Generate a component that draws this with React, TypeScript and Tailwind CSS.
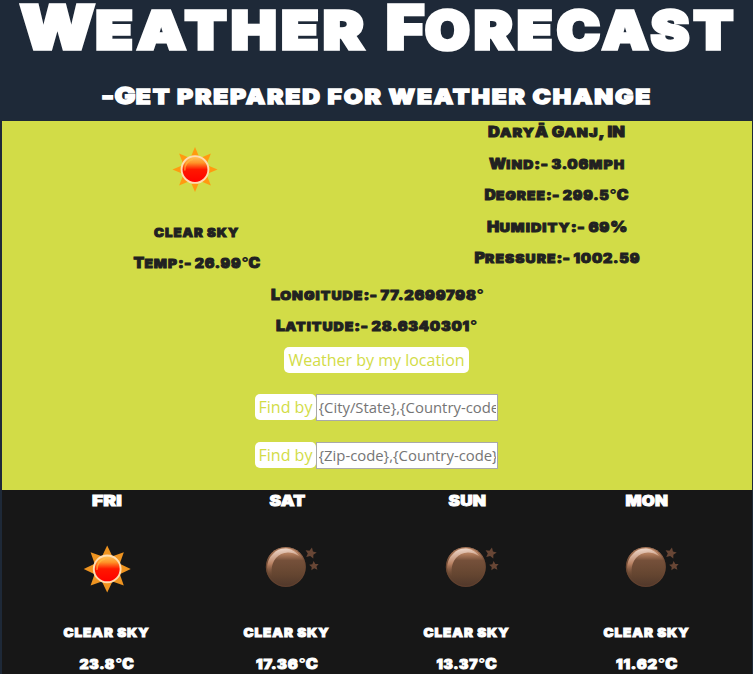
import { useLayoutEffect, useRef, useState } from "react";

type DisplayProps = { text: string; width: number; className: string };

// Chunky small-caps lettering, stretched horizontally to a given width.
function Display({ text, width, className }: DisplayProps) {
  const ref = useRef<HTMLSpanElement>(null);
  const [scale, setScale] = useState(1);
  useLayoutEffect(() => {
    if (ref.current) setScale(width / ref.current.offsetWidth);
  }, [text, width]);
  const parts = text.match(/[a-zā]+|[0-9.]+|°|[^a-zā0-9.°]+/g) ?? [];
  return (
    <div className={`flex justify-center whitespace-pre font-['Inter',sans-serif] font-black ${className}`}>
      <span ref={ref} className="inline-block shrink-0" style={{ transform: `scaleX(${scale})` }}>
        {parts.map((part, i) =>
          /^[a-zā]/.test(part) ? (
            <span key={i} className="text-[0.88em] uppercase tracking-[0.075em]">{part}</span>
          ) : /^[0-9.]/.test(part) ? (
            <span key={i} className="text-[0.92em] tracking-[0.05em]">{part}</span>
          ) : part === "°" ? (
            <span key={i} className="font-bold [-webkit-text-stroke:0.2px_currentColor]">{part}</span>
          ) : (
            <span key={i} className="tracking-[0.01em]">{part}</span>
          )
        )}
      </span>
    </div>
  );
}

const BODY = "text-[14px] leading-[21px] h-[21px] [-webkit-text-stroke:0.9px_currentColor]";
const TITLE = "h-[54px] text-[60px] leading-[54px] [-webkit-text-stroke:3.5px_currentColor]";

function Sun({ id, large = false }: { id: string; large?: boolean }) {
  return (
    <svg viewBox="0 0 100 100" className="block size-[100px]">
      <defs>
        <linearGradient id={id} x1="0" y1="0" x2="0" y2="1">
          <stop offset="0" stopColor="#ffc860" />
          <stop offset="0.25" stopColor="#ff9428" />
          <stop offset="0.5" stopColor="#ff1800" />
          <stop offset="1" stopColor="#ff0000" />
        </linearGradient>
      </defs>
      <g transform={large ? "translate(50.2 47.9)" : "translate(48 48.5)"}>
        {[0, 45, 90, 135, 180, 225, 270, 315].map((a) => (
          <path
            key={a}
            d={large ? "M-5.5-12 0-23.5 5.5-12Z" : "M-4-13 0-22.5 4-13Z"}
            fill={large ? "#ef9420" : "#ff9a10"}
            transform={`rotate(${a})`}
          />
        ))}
        <circle r="13.4" fill={`url(#${id})`} stroke="#ffdcb0" strokeWidth="1.9" />
        <path d="M-10.2 1A10.2 10.2 0 0 1 -2-10.2" fill="none" stroke="#ffc040" strokeWidth="1.6" opacity=".6" />
      </g>
    </svg>
  );
}

function Moon({ id }: { id: string }) {
  const star = "M0-6 1.9-2 6-1.8 3 1.2 3.8 5.2 0 3.2-3.8 5.2-3 1.2-6-1.8-1.9-2Z";
  return (
    <svg viewBox="0 0 100 100" className="block size-[100px]">
      <defs>
        <linearGradient id={id} x1="0" y1="0" x2="0" y2="1">
          <stop offset="0" stopColor="#cf9c7c" />
          <stop offset="0.18" stopColor="#b07c5c" />
          <stop offset="0.34" stopColor="#75503a" />
          <stop offset="0.7" stopColor="#644530" />
          <stop offset="1" stopColor="#50372a" />
        </linearGradient>
        <linearGradient id={`${id}-rim`} x1="0.3" y1="0" x2="0.4" y2="1">
          <stop offset="0" stopColor="#f0dacd" />
          <stop offset="0.45" stopColor="#b98263" />
          <stop offset="0.85" stopColor="#6b4732" stopOpacity="0" />
        </linearGradient>
      </defs>
      <circle cx="48.8" cy="45.9" r="20" fill={`url(#${id})`} />
      <path d="M37 60A17.5 17.5 0 0 1 36 33C43 25 56 26 62 35C53 29 44 31 39 37C33 44 34 54 37 60Z" fill={`url(#${id}-rim)`} />
      <circle cx="48.8" cy="45.9" r="19.4" fill="none" stroke="#704832" strokeWidth="1" opacity=".5" />
      <path d={star} transform="translate(73.8 32) rotate(12) scale(.95)" fill="#684635" />
      <path d={star} transform="translate(77 44.8) rotate(-5) scale(.8)" fill="#684635" />
    </svg>
  );
}

const details = [
  { text: "DaryĀ Ganj, IN", width: 137 },
  { text: "Wind:- 3.06mph", width: 136 },
  { text: "Degree:- 299.5°C", width: 144 },
  { text: "Humidity:- 69%", width: 140 },
  { text: "Pressure:- 1002.59", width: 166 },
];

const forecast = [
  { day: "FRI", dayWidth: 30, temp: "23.8°C", tempWidth: 54, night: false },
  { day: "SAT", dayWidth: 36, temp: "17.36°C", tempWidth: 62, night: true },
  { day: "SUN", dayWidth: 38, temp: "13.37°C", tempWidth: 60, night: true },
  { day: "MON", dayWidth: 42, temp: "11.62°C", tempWidth: 61, night: true },
];

function FindBy({ placeholder }: { placeholder: string }) {
  return (
    <div className="flex h-[27px] w-[243px] items-start">
      <button className="h-[26px] w-[61px] shrink-0 rounded-[5px] bg-white text-[16px] leading-[26px] text-[#d2dc47]">
        Find by
      </button>
      <input
        placeholder={placeholder}
        className="h-[27px] w-[182px] border border-[#a9a9a9] bg-white px-[1.5px] pb-px pt-0 text-[14.85px] placeholder:text-[#757575] placeholder:opacity-100"
      />
    </div>
  );
}

export default function App() {
  return (
    <main className="h-[674px] w-[753px] overflow-hidden bg-[#1e2938] pl-[2px] pr-px font-['Open_Sans',sans-serif]">
      <header className="h-[121px] text-white">
        <h1 className="flex gap-[19px] pl-[18px]">
          <div className="flex w-[348px] justify-center">
            <Display text="Weather" width={348} className={TITLE} />
          </div>
          <div className="flex w-[350px] justify-center">
            <Display text="Forecast" width={351} className={TITLE} />
          </div>
        </h1>
        <Display text="-Get prepared for weather change" width={551} className="mt-[24px] h-[36px] text-[23px] leading-[36px] [-webkit-text-stroke:1.3px_currentColor]" />
      </header>

      <section className="h-[369px] bg-[#d2dc47] text-[#212121]">
        <div className="grid h-[163px] grid-cols-2 px-[15px]">
          <div className="flex flex-col items-center">
            <Sun id="sun-now" />
            <Display text="clear sky" width={85} className={BODY} />
            <Display text="Temp:- 26.99°C" width={127} className={`mt-[10px] ${BODY}`} />
          </div>
          <div className="flex flex-col gap-[10.5px]">
            {details.map((d) => (
              <Display key={d.text} text={d.text} width={d.width} className={BODY} />
            ))}
          </div>
        </div>
        <div className="flex flex-col items-center">
          <Display text="Longitude:- 77.2699798°" width={213} className={BODY} />
          <Display text="Latitude:- 28.6340301°" width={201} className={`mb-[0.5px] mt-[10px] ${BODY}`} />
          <button className="mr-px mt-[10.5px] h-[26px] w-[185px] rounded-[5px] bg-white text-[16px] leading-[26px] text-[#d2dc47]">
            Weather by my location
          </button>
          <div className="mr-px mt-[21px] flex flex-col gap-[21px]">
            <FindBy placeholder="{City/State},{Country-code}" />
            <FindBy placeholder="{Zip-code},{Country-code}" />
          </div>
        </div>
      </section>

      <section className="grid h-[184px] grid-cols-4 bg-[#171717] px-[15px] text-white">
        {forecast.map((f) => (
          <div key={f.day} className="flex flex-col items-center">
            <Display text={f.day} width={f.dayWidth} className={BODY} />
            <div className="mt-[10px]">
              {f.night ? <Moon id={`moon-${f.day}`} /> : <Sun id="sun-fri" large />}
            </div>
            <Display text="clear sky" width={86} className={BODY} />
            <Display text={f.temp} width={f.tempWidth} className={`mt-[11px] ${BODY}`} />
          </div>
        ))}
      </section>
    </main>
  );
}
